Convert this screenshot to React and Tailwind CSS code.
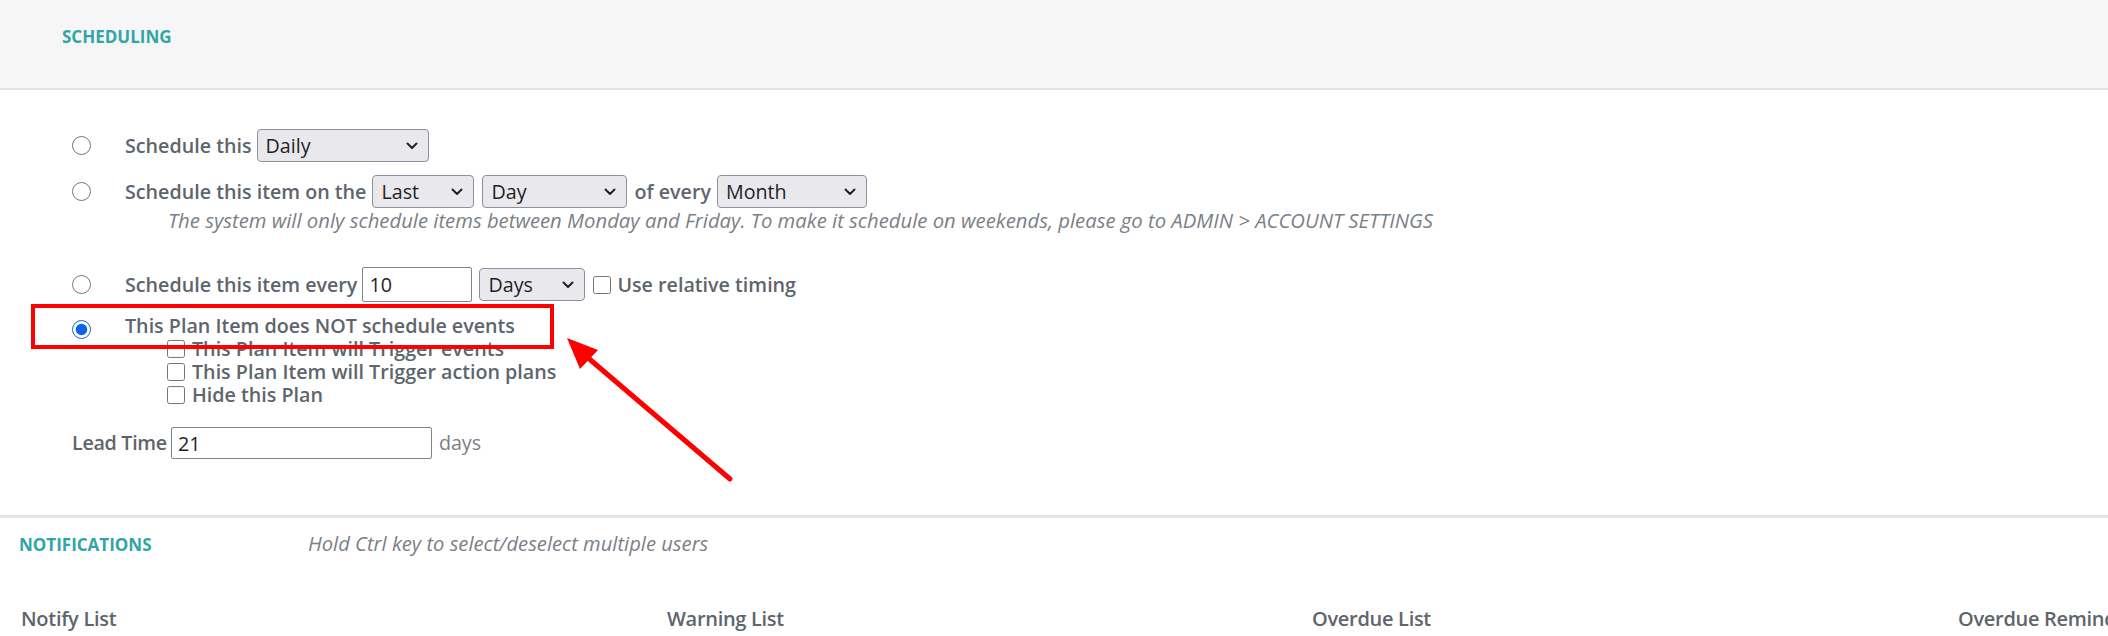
import React from 'react';

const Chevron = () => (
  <svg className="absolute right-[11px] top-1/2 -translate-y-1/2 pointer-events-none" width="12" height="8" viewBox="0 0 12 8">
    <path d="M1.5 1.5 L6 6 L10.5 1.5" fill="none" stroke="#222" strokeWidth="2" strokeLinecap="round" strokeLinejoin="round" />
  </svg>
);

const Select = ({ value, className }) => (
  <div className={`relative shrink-0 ${className}`}>
    <select
      defaultValue={value}
      className="appearance-none w-full h-full rounded-[4px] border border-[#8f8f9d] bg-[#e9e9ed] pl-[8px] text-[19.7px] font-medium text-[#1f1f1f] outline-none"
    >
      <option>{value}</option>
    </select>
    <Chevron />
  </div>
);

const Radio = ({ checked }) => (
  <input
    type="radio"
    name="sched"
    defaultChecked={checked}
    className="w-[19px] h-[19px] m-0 shrink-0 accent-[#0b63e5]"
  />
);

const Check = () => (
  <input type="checkbox" className="w-[18px] h-[18px] m-0 shrink-0" />
);

export default function App() {
  return (
    <div className="relative w-[2108px] h-[636px] overflow-hidden bg-white text-[#5e656d]" style={{ fontFamily: '"Open Sans", "Noto Sans", sans-serif' }}>
      {/* header */}
      <div className="h-[90px] bg-[#f6f6f6] border-b-2 border-[#e3e3e3] pl-[62px] pt-[26px]">
        <div className="text-[17px] font-bold text-[#30a5a8] leading-[22px]">SCHEDULING</div>
      </div>

      {/* scheduling options */}
      <div className="pl-[72px] pt-[39px] text-[19.7px] font-semibold">
        <div className="flex items-center h-[33px]">
          <Radio />
          <span className="ml-[34px]">Schedule this</span>
          <Select value="Daily" className="ml-[5px] w-[172px] h-[33px]" />
        </div>

        <div className="flex items-center h-[33px] mt-[13px]">
          <Radio />
          <span className="ml-[34px]">Schedule this item on the</span>
          <Select value="Last" className="ml-[6px] w-[102px] h-[33px]" />
          <Select value="Day" className="ml-[8px] w-[145px] h-[33px]" />
          <span className="ml-[7px]">of every</span>
          <Select value="Month" className="ml-[6px] w-[150px] h-[33px]" />
        </div>
        <div className="pl-[96px] text-[20.3px] font-normal italic text-[#7b8087] leading-[24px]">
          The system will only schedule items between Monday and Friday. To make it schedule on weekends, please go to ADMIN &gt; ACCOUNT SETTINGS
        </div>

        <div className="flex items-center h-[35px] mt-[35px]">
          <Radio />
          <span className="ml-[34px]">Schedule this item every</span>
          <input
            defaultValue="10"
            className="ml-[5px] w-[110px] h-[35px] rounded-[2px] border border-[#858585] bg-white pl-[6px] text-[19.7px] font-medium text-[#1f1f1f] outline-none"
          />
          <Select value="Days" className="ml-[7px] w-[106px] h-[33px]" />
          <span className="ml-[8px] flex"><Check /></span>
          <span className="ml-[6px]">Use relative timing</span>
        </div>

        <div className="flex items-center h-[26px] mt-[14px]">
          <Radio checked />
          <span className="ml-[34px] -mt-[6px]">This Plan Item does NOT schedule events</span>
        </div>
        <div className="pl-[95px] leading-[23px] -mt-[5px]">
          {['This Plan Item will Trigger events', 'This Plan Item will Trigger action plans', 'Hide this Plan'].map((t) => (
            <div key={t} className="flex items-center h-[23px]">
              <Check />
              <span className="ml-[7px]">{t}</span>
            </div>
          ))}
        </div>
      </div>

      {/* lead time */}
      <div className="flex items-center h-[32px] mt-[21px] pl-[72px] text-[19.7px]">
        <span className="font-semibold tracking-[-0.3px]">Lead Time</span>
        <input
          defaultValue="21"
          className="ml-[4px] w-[261px] h-[32px] rounded-[2px] border border-[#858585] bg-white pl-[6px] text-[19.7px] font-medium text-[#1f1f1f] outline-none"
        />
        <span className="ml-[7px] text-[#7b8087]">days</span>
      </div>

      {/* notifications */}
      <div className="mt-[56px] border-t-[3px] border-[#e4e4e4]">
        <div className="flex items-baseline h-[50px] pt-[10px]">
          <div className="pl-[19px] w-[308px] text-[17px] font-bold text-[#30a5a8]">NOTIFICATIONS</div>
          <div className="text-[20.2px] italic text-[#7b8087]">Hold Ctrl key to select/deselect multiple users</div>
        </div>
        <div className="flex pl-[21px] mt-[36px] text-[20px] font-semibold tracking-[-0.3px] whitespace-nowrap">
          <div className="w-[646px] shrink-0">Notify List</div>
          <div className="w-[645px] shrink-0">Warning List</div>
          <div className="w-[646px] shrink-0">Overdue List</div>
          <div className="w-[646px] shrink-0">Overdue Reminders</div>
        </div>
      </div>

      {/* annotation: red box + arrow */}
      <div className="absolute left-[31px] top-[304px] w-[523px] h-[45px] border-[4px] border-[#ff0000] pointer-events-none" />
      <svg className="absolute left-0 top-0 pointer-events-none" width="2108" height="636">
        <line x1="730" y1="479" x2="580" y2="351" stroke="#ff0000" strokeWidth="5" strokeLinecap="round" />
        <polygon points="567,338 580,369 598,350" fill="#ff0000" />
      </svg>
    </div>
  );
}
